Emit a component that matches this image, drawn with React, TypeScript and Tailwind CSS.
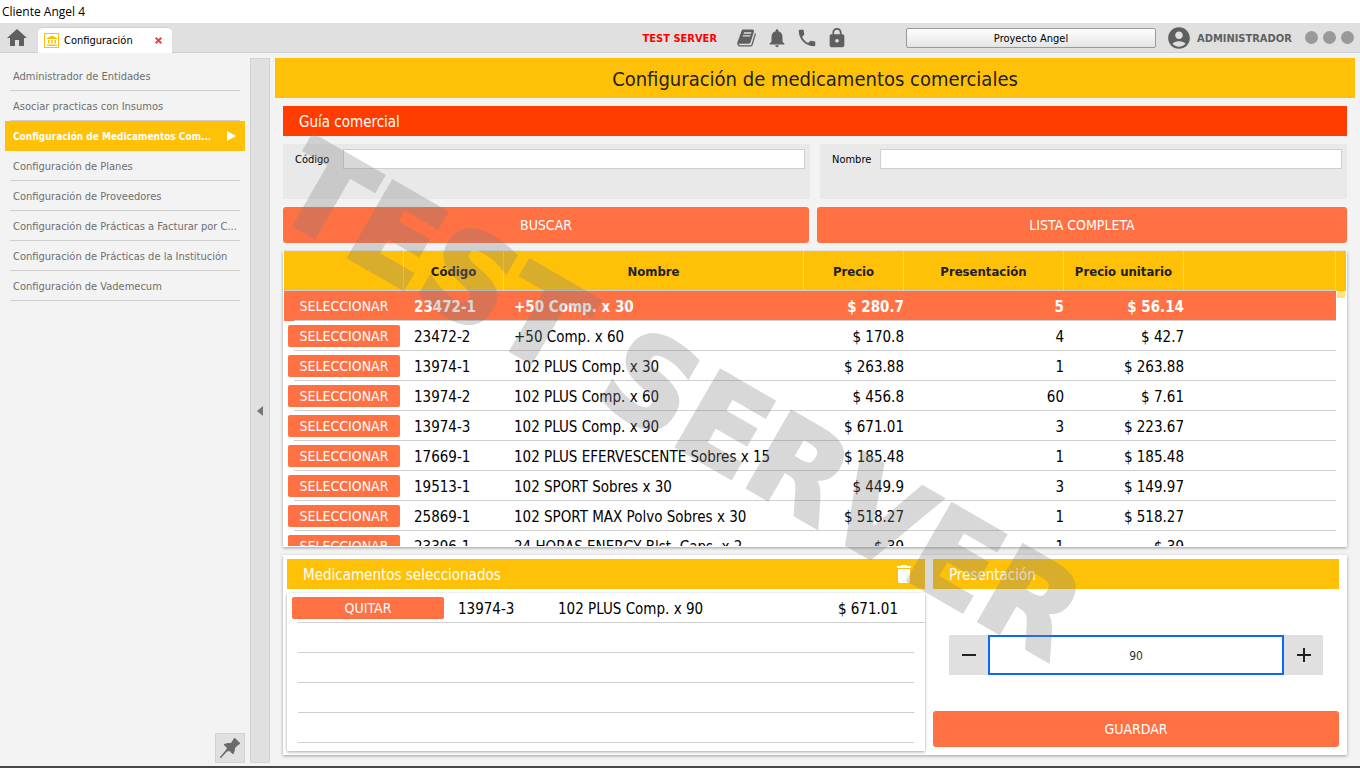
import { useState } from "react";
import { MdHome, MdNotifications, MdPhone, MdLock, MdAccountCircle, MdAccountBalance, MdDelete } from "react-icons/md";
import clsx from "clsx";

const menuItems = [
  "Administrador de Entidades",
  "Asociar practicas con Insumos",
  "Configuración de Medicamentos Com...",
  "Configuración de Planes",
  "Configuración de Proveedores",
  "Configuración de Prácticas a Facturar por C...",
  "Configuración de Prácticas de la Institución",
  "Configuración de Vademecum",
];

type Medicamento = {
  codigo: string;
  nombre: string;
  precio: string;
  presentacion: number;
  unitario: string;
};

const medicamentos: Medicamento[] = [
  { codigo: "23472-1", nombre: "+50 Comp. x 30", precio: "$ 280.7", presentacion: 5, unitario: "$ 56.14" },
  { codigo: "23472-2", nombre: "+50 Comp. x 60", precio: "$ 170.8", presentacion: 4, unitario: "$ 42.7" },
  { codigo: "13974-1", nombre: "102 PLUS Comp. x 30", precio: "$ 263.88", presentacion: 1, unitario: "$ 263.88" },
  { codigo: "13974-2", nombre: "102 PLUS Comp. x 60", precio: "$ 456.8", presentacion: 60, unitario: "$ 7.61" },
  { codigo: "13974-3", nombre: "102 PLUS Comp. x 90", precio: "$ 671.01", presentacion: 3, unitario: "$ 223.67" },
  { codigo: "17669-1", nombre: "102 PLUS EFERVESCENTE Sobres x 15", precio: "$ 185.48", presentacion: 1, unitario: "$ 185.48" },
  { codigo: "19513-1", nombre: "102 SPORT Sobres x 30", precio: "$ 449.9", presentacion: 3, unitario: "$ 149.97" },
  { codigo: "25869-1", nombre: "102 SPORT MAX Polvo Sobres x 30", precio: "$ 518.27", presentacion: 1, unitario: "$ 518.27" },
  { codigo: "23396-1", nombre: "24 HORAS ENERGY Blst. Caps. x 2", precio: "$ 39", presentacion: 1, unitario: "$ 39" },
];

function BookIcon() {
  return (
    <svg viewBox="0 0 1664 1792" className="h-5 w-[19px]" fill="currentColor">
      <path d="M1639 478q40 57 18 129l-275 906q-19 64-76.5 107.5T1183 1664H260q-77 0-148.5-53.5T12 1479q-24-67-2-127 0-4 3-27t4-37q1-8-3-21.5t-3-19.5q2-11 8-21t16.5-23.5T52 1179q23-38 45-91.5t30-91.5q3-10 .5-30t-.5-28q3-11 17-28t17-23q21-36 42-92t25-90q1-9-2.5-32t.5-28q4-13 22-30.5t22-22.5q19-26 42.5-84.5T340 411q1-8-3-25.5t-2-26.5q2-8 9-18t18-23 17-21q8-12 16.5-30.5t15-35 16-36 19.5-32 26.5-23.5 36-11.5T556 134l-1 3q38-9 51-9h761q74 0 114 56t18 130l-274 906q-36 119-71.5 153.5T1025 1408H156q-27 0-38 15-11 16-1 43 24 70 144 70h923q29 0 56-15.5t35-41.5l300-987q7-22 5-57 38 15 59 43zm-1064 2q-4 13 2 22.5t20 9.5h608q13 0 25.5-9.5T1247 480l21-64q4-13-2-22.5t-20-9.5H638q-13 0-25.5 9.5T596 416zm-83 256q-4 13 2 22.5t20 9.5h608q13 0 25.5-9.5T1164 736l21-64q4-13-2-22.5t-20-9.5H555q-13 0-25.5 9.5T513 672z" />
    </svg>
  );
}

function PinIcon() {
  return (
    <svg viewBox="0 0 20 20" className="size-5" fill="#6b6b6b">
      <path d="M14 0h1l5 5v1l-2 1-3 3v2l-1.500 4h-1L9.500 13 7 13.500 1 20H0v-1l5.500-6.500L7 10 4 7V6l4-1h3l2-3z" />
    </svg>
  );
}

function TopBar() {
  return (
    <header className="flex h-[30px] shrink-0 items-center border-b border-[#cfcfcf] bg-[#e0e0e0] text-[#5f5f5f]">
      <button aria-label="Inicio" className="ml-[5px]">
        <MdHome className="size-6" />
      </button>
      <div className="-mb-px ml-[9px] mt-1 flex h-[26px] w-[134px] items-center self-start rounded-t-[5px] border-t border-[#d2d2d2] bg-white">
        <span className="ml-[6px] flex size-[15px] items-center justify-center border border-[#ffc107] text-[#ffc107]">
          <MdAccountBalance className="size-3" />
        </span>
        <span className="ml-[5px] pt-[2px] text-[11px] text-black">Configuración</span>
        <button aria-label="Cerrar" className="ml-auto mr-[10px]">
          <svg viewBox="0 0 7 7" className="size-[7px]" stroke="#f44336" strokeWidth="2">
            <path d="M.7.7l5.600 5.600M6.300.7L.7 6.300" />
          </svg>
        </button>
      </div>
      <div className="ml-auto flex items-center pr-[6px]">
        <span className="pt-[3px] text-[11px] font-bold text-[#ff0000]">TEST SERVER</span>
        <button aria-label="Agenda" className="ml-5"><BookIcon /></button>
        <button aria-label="Notificaciones" className="ml-[10px]"><MdNotifications className="size-[22px]" /></button>
        <button aria-label="Teléfono" className="ml-2"><MdPhone className="size-[22px]" /></button>
        <button aria-label="Bloquear" className="ml-2"><MdLock className="size-[22px]" /></button>
        <button className="ml-[58px] h-5 w-[250px] rounded-[2px] border border-[#9a9a9a] bg-linear-to-b from-white to-[#e4e4e4] pt-[2px] text-[11px] leading-4 text-black">
          Proyecto Angel
        </button>
        <MdAccountCircle className="ml-[10px] size-[26px]" />
        <span className="ml-[5px] w-[98px] pt-[3px] text-[11px] font-bold">ADMINISTRADOR</span>
        <span className="ml-[10px] flex gap-[5px]">
          <button aria-label="Minimizar" className="size-[13px] rounded-full bg-[#999999]" />
          <button aria-label="Maximizar" className="size-[13px] rounded-full bg-[#999999]" />
          <button aria-label="Salir" className="size-[13px] rounded-full bg-[#999999]" />
        </span>
      </div>
    </header>
  );
}

function Sidebar() {
  const [active, setActive] = useState(2);

  return (
    <aside className="flex w-[245px] shrink-0 flex-col pb-[3px] pt-2">
      <nav>
        {menuItems.map((item, i) => (
          <a
            key={item}
            href="#"
            onClick={() => setActive(i)}
            className={clsx(
              "flex h-[30px] items-center whitespace-nowrap",
              i === active
                ? "ml-[5px] bg-[#ffc107] pl-2 pr-[9px] text-[10px] font-bold text-white"
                : "ml-[10px] mr-[5px] border-b border-[#cfcfcf] pl-[3px] text-[11px] text-[#6e6e6e]"
            )}
          >
            <span className={i === active ? "pt-px" : "pt-[3px]"}>{item}</span>
            {i === active && (
              <svg viewBox="0 0 9 10" className="ml-auto h-[10px] w-[9px]" fill="white">
                <path d="M0 0L9 5L0 10z" />
              </svg>
            )}
          </a>
        ))}
      </nav>
      <button
        aria-label="Fijar menú"
        className="mt-auto flex size-[30px] items-center justify-center self-end border border-[#d2d2d2] bg-[#e0e0e0]"
      >
        <PinIcon />
      </button>
    </aside>
  );
}

function SearchField({ id, label }: { id: string; label: string }) {
  return (
    <div className="flex h-[55px] flex-1 items-start bg-[#e9e9e9] p-[5px]">
      <label htmlFor={id} className="w-[55px] pl-[7px] pt-px text-[11px] leading-5 text-black">
        {label}
      </label>
      <input id={id} className="h-5 min-w-0 flex-1 border border-[#cfcfcf] bg-white px-1 text-[11px] outline-none" />
    </div>
  );
}

function RowButton({ children, onClick }: { children: string; onClick?: () => void }) {
  return (
    <button onClick={onClick} className="block h-[22px] w-full rounded-[2px] bg-[#ff7043] text-sm font-normal leading-[22px] text-white">
      {children}
    </button>
  );
}

function GuiaTable({ onSelect }: { onSelect: (m: Medicamento) => void }) {
  const th = "border-b border-b-[#cfcfcf] border-r border-r-[#ffd54f] p-0 pt-[2px] font-bold";

  return (
    <div className="min-h-0 flex-1 overflow-hidden bg-white px-px pb-px shadow-[0_1px_3px_rgba(0,0,0,0.35)]">
      <div className="h-full overflow-hidden">
        <table className="w-full table-fixed border-separate border-spacing-0">
          <colgroup>
            <col className="w-[120px]" />
            <col className="w-[100px]" />
            <col className="w-[300px]" />
            <col className="w-[100px]" />
            <col className="w-[160px]" />
            <col className="w-[120px]" />
            <col />
            <col className="w-[10px]" />
          </colgroup>
          <thead>
            <tr className="h-10 bg-[#ffc107] text-[13px] text-[#212121]">
              <th className={th}></th>
              <th className={th}>Código</th>
              <th className={th}>Nombre</th>
              <th className={th}>Precio</th>
              <th className={th}>Presentación</th>
              <th className={th}>Precio unitario</th>
              <th className={th}></th>
              <th className="p-0"></th>
            </tr>
          </thead>
          <tbody className="text-[15px] leading-5 text-black">
            {medicamentos.map((m, i) => {
              const td = clsx("h-[30px] p-0", i === 0 && "bg-[#ff7043] font-bold text-white");
              const line = "border-b border-[#cfcfcf] pt-[2px]";
              return (
                <tr key={m.codigo}>
                  {/* the row line starts a bit after the button's edge */}
                  <td className={clsx(td, "relative px-1 after:absolute after:bottom-0 after:left-[10px] after:right-0 after:h-px after:bg-[#cfcfcf]")}>
                    <RowButton onClick={() => onSelect(m)}>SELECCIONAR</RowButton>
                  </td>
                  <td className={clsx(td, line, "pl-[10px]")}>{m.codigo}</td>
                  <td className={clsx(td, line, "truncate pl-[10px]")}>{m.nombre}</td>
                  <td className={clsx(td, line, "text-right")}>{m.precio}</td>
                  <td className={clsx(td, line, "text-right")}>{m.presentacion}</td>
                  <td className={clsx(td, line, "text-right")}>{m.unitario}</td>
                  <td className={clsx(td, line)}></td>
                  <td className="p-0 align-top">
                    {i === 0 && <div className="mx-px h-[7px] bg-[#ffe082]" />}
                  </td>
                </tr>
              );
            })}
          </tbody>
        </table>
      </div>
    </div>
  );
}

function Seleccionados({ items, onRemove, onClear }: { items: Medicamento[]; onRemove: (codigo: string) => void; onClear: () => void }) {
  const emptyRows = Math.max(0, 5 - items.length);
  const firstLine = "relative after:absolute after:bottom-0 after:left-[11px] after:h-px after:bg-[#cfcfcf]";
  const line = "border-b border-[#cfcfcf] p-0 pt-[2px]";

  return (
    <section className="flex min-w-0 flex-1 flex-col">
      <div className="flex h-[30px] items-center bg-[#ffc107] pl-4 pr-[9px] text-white">
        <h3 className="pt-[2px] text-[15px]">Medicamentos seleccionados</h3>
        <button aria-label="Vaciar" onClick={onClear} className="ml-auto">
          <MdDelete className="size-6" />
        </button>
      </div>
      <div className="mt-1 flex-1 overflow-hidden shadow-[0_1px_3px_rgba(0,0,0,0.35)]">
        <table className="w-full table-fixed border-separate border-spacing-0 text-[15px] leading-5 text-black">
          <colgroup>
            <col className="w-[161px]" />
            <col className="w-[100px]" />
            <col />
            <col className="w-[100px]" />
            <col className="w-[27px]" />
          </colgroup>
          <tbody>
            {items.map((m) => (
              <tr key={m.codigo}>
                <td className={clsx(firstLine, "h-[30px] p-0 pl-[5px] pr-1 after:right-0")}>
                  <RowButton onClick={() => onRemove(m.codigo)}>QUITAR</RowButton>
                </td>
                <td className={clsx(line, "pl-[10px]")}>{m.codigo}</td>
                <td className={clsx(line, "truncate pl-[10px]")}>{m.nombre}</td>
                <td className={clsx(line, "text-right")}>{m.precio}</td>
                <td className={line}></td>
              </tr>
            ))}
            {Array.from({ length: emptyRows }, (_, i) => (
              <tr key={i}>
                <td colSpan={5} className={clsx(firstLine, "h-[30px] p-0 after:right-[11px]")}></td>
              </tr>
            ))}
          </tbody>
        </table>
      </div>
    </section>
  );
}

function Presentacion() {
  const [value, setValue] = useState(90);

  return (
    <section className="flex w-[406px] shrink-0 flex-col pb-1">
      <h3 className="flex h-[30px] shrink-0 items-center bg-[#ffc107] pl-4 pt-[2px] text-[15px] text-white">
        <label htmlFor="presentacion">Presentación</label>
      </h3>
      <div className="flex flex-1 items-center px-4 pt-[10px]">
        <button aria-label="Restar" onClick={() => setValue(value - 1)} className="flex h-10 w-[39px] items-center justify-center bg-[#e0e0e0]">
          <svg viewBox="0 0 14 14" className="size-[14px]" stroke="#212121" strokeWidth="2">
            <path d="M0 7h14" />
          </svg>
        </button>
        <input
          id="presentacion"
          inputMode="numeric"
          value={value}
          onChange={(e) => setValue(Number(e.target.value) || 0)}
          className="h-10 min-w-0 flex-1 border-2 border-[#0a66ff] bg-white pt-[2px] text-center text-xs text-[#333333] outline-none"
        />
        <button aria-label="Sumar" onClick={() => setValue(value + 1)} className="flex h-10 w-[39px] items-center justify-center bg-[#e0e0e0]">
          <svg viewBox="0 0 14 14" className="size-[14px]" stroke="#212121" strokeWidth="2">
            <path d="M0 7h14M7 0v14" />
          </svg>
        </button>
      </div>
      <button className="h-9 shrink-0 rounded-[3px] bg-[#ff7043] text-sm text-white">GUARDAR</button>
    </section>
  );
}

export default function App() {
  const [seleccionados, setSeleccionados] = useState<Medicamento[]>([medicamentos[4]]);

  const handleSelect = (m: Medicamento) => {
    if (seleccionados.some((s) => s.codigo === m.codigo)) return;
    setSeleccionados([...seleccionados, m]);
  };

  const handleRemove = (codigo: string) => {
    setSeleccionados(seleccionados.filter((s) => s.codigo !== codigo));
  };

  return (
    <div className="relative flex h-screen flex-col overflow-hidden border-b-2 border-[#474747] bg-[#f3f3f3] font-['DejaVu_Sans_Condensed','DejaVu_Sans',sans-serif]">
      <div className="h-[23px] shrink-0 bg-white pl-[2px] font-['Open_Sans',sans-serif] text-xs leading-6 text-black">
        Cliente Angel 4
      </div>
      <TopBar />

      <div className="flex min-h-0 flex-1">
        <Sidebar />

        {/* Splitter */}
        <button
          aria-label="Contraer menú"
          className="mb-[3px] ml-[5px] mt-[5px] flex w-5 shrink-0 items-center justify-center border border-[#d2d2d2] bg-[#e0e0e0]"
        >
          <svg viewBox="0 0 6 10" className="h-[10px] w-[6px]" fill="#757575">
            <path d="M6 0L0 5L6 10z" />
          </svg>
        </button>

        <main className="flex min-w-0 flex-1 flex-col px-[5px] pb-[11px] pt-[5px]">
          <h1 className="flex h-10 shrink-0 items-center justify-center bg-[#ffc107] pt-[2px] text-xl text-[#212121]">
            Configuración de medicamentos comerciales
          </h1>

          <div className="flex min-h-0 flex-1 flex-col gap-2 px-2 pt-2">
            <h2 className="flex h-[30px] shrink-0 items-center bg-[#ff3d00] pl-4 pt-[2px] text-[15px] text-white">Guía comercial</h2>

            <div className="flex shrink-0 gap-[10px]">
              <SearchField id="codigo" label="Código" />
              <SearchField id="nombre" label="Nombre" />
            </div>

            <div className="grid shrink-0 grid-cols-[526fr_530fr] gap-2 text-sm text-white">
              <button className="h-9 rounded-[3px] bg-[#ff7043]">BUSCAR</button>
              <button className="h-9 rounded-[3px] bg-[#ff7043]">LISTA COMPLETA</button>
            </div>

            <GuiaTable onSelect={handleSelect} />

            <div className="flex h-[200px] shrink-0 gap-2 bg-white p-1 pr-2 shadow-[0_1px_3px_rgba(0,0,0,0.35)]">
              <Seleccionados items={seleccionados} onRemove={handleRemove} onClear={() => setSeleccionados([])} />
              <Presentacion />
            </div>
          </div>
        </main>
      </div>

      {/* Watermark */}
      <div className="pointer-events-none absolute inset-0 top-9 flex items-center justify-center">
        <span className="rotate-30 whitespace-nowrap font-['DejaVu_Sans',sans-serif] text-[120px] font-bold leading-none text-[#808080] opacity-30 [-webkit-text-stroke:4px_#808080] [stroke-linejoin:round]">
          TEST SERVER
        </span>
      </div>
    </div>
  );
}
